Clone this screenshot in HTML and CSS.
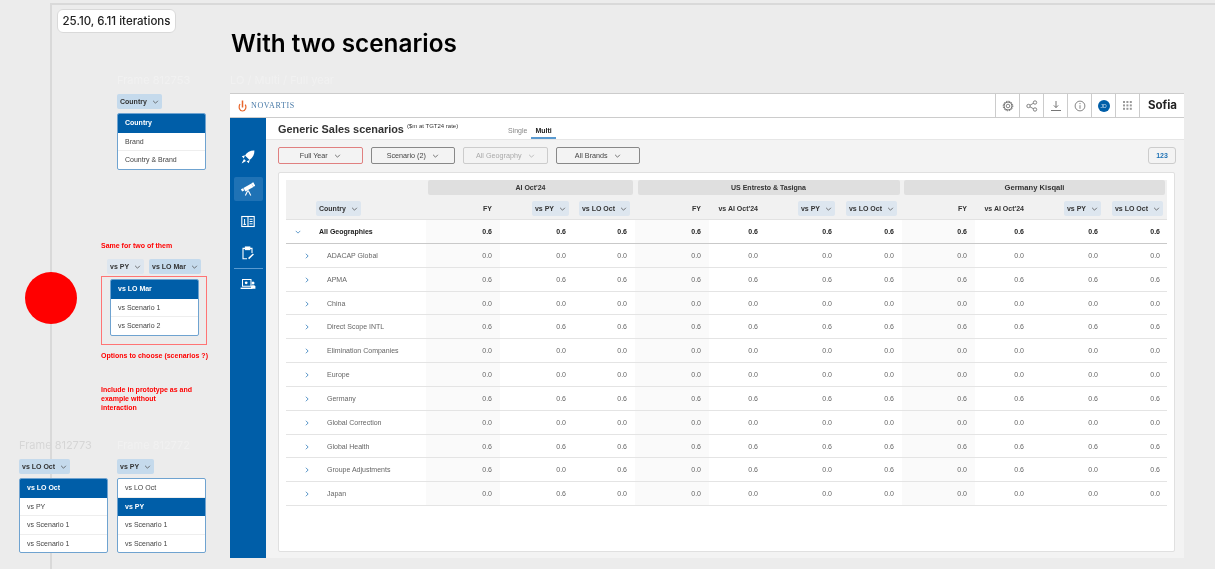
FILE: index.html
```html
<!DOCTYPE html>
<html lang="en">
<head>
  <meta charset="UTF-8">
  <title>With two scenarios</title>
  <link rel="stylesheet" href="styles.css">
</head>
<body>
  <svg class="sprite" width="0" height="0">
    <symbol id="chev" viewBox="0 0 8 5"><path d="M1 1l3 3 3-3" fill="none" stroke="currentColor" stroke-width="0.9"/></symbol>
    <symbol id="next" viewBox="0 0 5 8"><path d="M1 1l3 3-3 3" fill="none" stroke="currentColor" stroke-width="1"/></symbol>
  </svg>

  <div class="frame-lines"></div>
  <div class="tag">25.10, 6.11 iterations</div>
  <h1 class="page-title">With two scenarios</h1>

  <div class="frame-label label-country">Frame 812753</div>
  <div class="frame-label label-lo">LO / Multi / Full year</div>
  <div class="frame-label label-oct">Frame 812773</div>
  <div class="frame-label label-py">Frame 812772</div>

  <!-- country picker -->
  <div class="picker pick-country">
    <span class="chip strong">Country <svg class="chev"><use href="#chev"/></svg></span>
    <ul class="menu">
      <li class="on">Country</li>
      <li>Brand</li>
      <li>Country &amp; Brand</li>
    </ul>
  </div>

  <!-- notes and the two scenario chips -->
  <div class="note note-same">Same for two of them</div>
  <div class="chips-two">
    <span class="chip">vs PY <svg class="chev"><use href="#chev"/></svg></span>
    <span class="chip strong">vs LO Mar <svg class="chev"><use href="#chev"/></svg></span>
  </div>
  <div class="red-box">
    <ul class="menu">
      <li class="on">vs LO Mar</li>
      <li>vs Scenario 1</li>
      <li>vs Scenario 2</li>
    </ul>
  </div>
  <div class="note note-options">Options to choose (scenarios ?)</div>
  <div class="note note-include">Include in prototype as and<br>example without<br>interaction</div>
  <div class="red-dot"></div>

  <div class="picker pick-oct">
    <span class="chip strong">vs LO Oct <svg class="chev"><use href="#chev"/></svg></span>
    <ul class="menu">
      <li class="on">vs LO Oct</li>
      <li>vs PY</li>
      <li>vs Scenario 1</li>
      <li>vs Scenario 1</li>
    </ul>
  </div>
  <div class="picker pick-py">
    <span class="chip strong">vs PY <svg class="chev"><use href="#chev"/></svg></span>
    <ul class="menu">
      <li>vs LO Oct</li>
      <li class="on">vs PY</li>
      <li>vs Scenario 1</li>
      <li>vs Scenario 1</li>
    </ul>
  </div>

  <!-- the app window -->
  <div class="app">
    <header class="topbar">
      <div class="logo">
        <svg width="9" height="12" viewBox="0 0 9 12"><path d="M4.5 0.5v7" stroke="#e8662c" stroke-width="1.5" fill="none"/><path d="M2 4C0.2 7.2 1.6 11 4.5 11S8.8 7.2 7.2 4.6" stroke="#e8662c" stroke-width="1.2" fill="none"/></svg>
        <span>NOVARTIS</span>
      </div>
      <div class="tools">
        <span class="tool"><svg width="12" height="12" viewBox="0 0 12 12" fill="none" stroke="#666"><circle cx="6" cy="6" r="1.8" stroke-width="0.8"/><circle cx="6" cy="6" r="4" stroke-width="0.9"/><circle cx="6" cy="6" r="4.8" stroke-width="1" stroke-dasharray="1.4 1.1"/></svg></span>
        <span class="tool"><svg width="12" height="12" viewBox="0 0 12 12" fill="none" stroke="#666" stroke-width="0.8"><circle cx="2.5" cy="6" r="1.7"/><circle cx="9" cy="2.5" r="1.7"/><circle cx="9" cy="9.5" r="1.7"/><path d="M4 5.2l3.5-2M4 6.8l3.5 2"/></svg></span>
        <span class="tool"><svg width="12" height="12" viewBox="0 0 12 12" fill="none" stroke="#666" stroke-width="0.9"><path d="M6 1v6.5M3.8 5.4L6 7.6l2.2-2.2M1 10.5h10"/></svg></span>
        <span class="tool"><svg width="12" height="12" viewBox="0 0 12 12" fill="none" stroke="#666" stroke-width="0.8"><circle cx="6" cy="6" r="4.9"/><path d="M6 5.2v3.6M6 3v1.1"/></svg></span>
        <span class="tool"><span class="avatar">JD</span></span>
        <span class="tool"><svg width="9" height="9" viewBox="0 0 9 9" fill="#999"><rect width="2" height="2"/><rect x="3.4" width="2" height="2"/><rect x="6.8" width="2" height="2"/><rect y="3.4" width="2" height="2"/><rect x="3.4" y="3.4" width="2" height="2"/><rect x="6.8" y="3.4" width="2" height="2"/><rect y="6.8" width="2" height="2"/><rect x="3.4" y="6.8" width="2" height="2"/><rect x="6.8" y="6.8" width="2" height="2"/></svg></span>
        <span class="brand">Sofia</span>
      </div>
    </header>

    <nav class="sidebar">
      <a class="nav-item"><svg width="14" height="14" viewBox="0 0 14 14" fill="#fff"><path d="M13.4 0.6C9.6 0.4 6.2 2 4 5.4L8.6 10c3.4-2.2 5-5.6 4.8-9.4z"/><path d="M4 5.2L0.8 6.2l2 2.2zM8.8 10l-1 3.2-2.2-2z"/><path d="M3 9l-2.4 4.4L5 11z"/></svg></a>
      <a class="nav-item active"><svg width="14" height="14" viewBox="0 0 14 14" fill="#fff"><path d="M2.4 6L10.4 1.4l2 3.6-8 4.4z"/><rect x="11.2" y="0.4" width="2.2" height="4.2" transform="rotate(-28 12.3 2.5)"/><rect x="0.4" y="6.6" width="2.4" height="2.6" transform="rotate(-28 1.6 7.9)"/><path d="M6.8 8.4L4.4 13.6M7.2 8.4l2.6 5.2" stroke="#fff" stroke-width="1.1" fill="none"/></svg></a>
      <a class="nav-item"><svg width="14" height="13" viewBox="0 0 14 13" fill="none" stroke="#fff"><rect x="0.8" y="1.5" width="12.4" height="10" stroke-width="1.1"/><path d="M7 1.5v10" stroke-width="1.1"/><path d="M3.6 4v5.6M2.4 9.4h2.6M8.6 4.2h3M8.6 6.5h3M8.6 8.8h3" stroke-width="1"/></svg></a>
      <a class="nav-item"><svg width="14" height="14" viewBox="0 0 14 14" fill="none" stroke="#fff" stroke-width="1.1"><path d="M11 7V2.4H9M4 2.4H2v10.4h4"/><rect x="4.4" y="1" width="4.4" height="2.6" fill="#fff"/><path d="M7.6 12.6l4.8-4.6" stroke-width="1.5"/></svg></a>
      <div class="nav-line"></div>
      <a class="nav-item"><svg width="16" height="13" viewBox="0 0 16 13" fill="#fff"><path d="M2 1h9.5v7.8H2zM3 2v5.8h7.5V2z" fill-rule="evenodd"/><path d="M0.6 9.6h11.8v1.4H0.6z"/><circle cx="6.2" cy="4.8" r="1.4"/><circle cx="13" cy="5" r="1.5"/><path d="M11 10.8V8.6c0-.8.8-1.3 2-1.3s2.4.5 2.4 1.3v2.2z"/></svg></a>
    </nav>

    <main class="main">
      <div class="title-row">
        <h2>Generic Sales scenarios <sup>($m at TGT24 rate)</sup></h2>
        <div class="tabs">
          <span class="tab">Single</span>
          <span class="tab selected">Multi</span>
        </div>
      </div>

      <div class="toolbar">
        <span class="btn btn-red">Full Year <svg class="chev"><use href="#chev"/></svg></span>
        <span class="btn">Scenario (2) <svg class="chev"><use href="#chev"/></svg></span>
        <span class="btn btn-off">All Geography <svg class="chev"><use href="#chev"/></svg></span>
        <span class="btn">All Brands <svg class="chev"><use href="#chev"/></svg></span>
        <span class="btn-num">123</span>
      </div>

      <section class="card">
        <div class="head">
          <div class="row groups">
            <div class="group g-one">AI Oct'24</div>
            <div class="group g-two">US Entresto &amp; Tasigna</div>
            <div class="group g-three">Germany Kisqali</div>
          </div>
          <div class="row subs">
            <div class="name"><span class="chip">Country <svg class="chev"><use href="#chev"/></svg></span></div>
            <div class="col">FY</div>
            <div class="col"><span class="chip">vs PY <svg class="chev"><use href="#chev"/></svg></span></div>
            <div class="col"><span class="chip">vs LO Oct <svg class="chev"><use href="#chev"/></svg></span></div>
            <div class="col">FY</div>
            <div class="col">vs AI Oct'24</div>
            <div class="col"><span class="chip">vs PY <svg class="chev"><use href="#chev"/></svg></span></div>
            <div class="col"><span class="chip">vs LO Oct <svg class="chev"><use href="#chev"/></svg></span></div>
            <div class="col">FY</div>
            <div class="col">vs AI Oct'24</div>
            <div class="col"><span class="chip">vs PY <svg class="chev"><use href="#chev"/></svg></span></div>
            <div class="col"><span class="chip">vs LO Oct <svg class="chev"><use href="#chev"/></svg></span></div>
          </div>
        </div>

        <div class="row total">
          <div class="name"><svg class="toggle"><use href="#chev"/></svg>All Geographies</div>
          <div class="fy">0.6</div><div>0.6</div><div>0.6</div>
          <div class="fy">0.6</div><div>0.6</div><div>0.6</div><div>0.6</div>
          <div class="fy">0.6</div><div>0.6</div><div>0.6</div><div>0.6</div>
        </div>
        <div class="row item">
          <div class="name"><svg class="arrow"><use href="#next"/></svg>ADACAP Global</div>
          <div class="fy">0.0</div><div>0.0</div><div>0.0</div>
          <div class="fy">0.0</div><div>0.0</div><div>0.0</div><div>0.0</div>
          <div class="fy">0.0</div><div>0.0</div><div>0.0</div><div>0.0</div>
        </div>
        <div class="row item">
          <div class="name"><svg class="arrow"><use href="#next"/></svg>APMA</div>
          <div class="fy">0.6</div><div>0.6</div><div>0.6</div>
          <div class="fy">0.6</div><div>0.6</div><div>0.6</div><div>0.6</div>
          <div class="fy">0.6</div><div>0.6</div><div>0.6</div><div>0.6</div>
        </div>
        <div class="row item short">
          <div class="name"><svg class="arrow"><use href="#next"/></svg>China</div>
          <div class="fy">0.0</div><div>0.0</div><div>0.0</div>
          <div class="fy">0.0</div><div>0.0</div><div>0.0</div><div>0.0</div>
          <div class="fy">0.0</div><div>0.0</div><div>0.0</div><div>0.0</div>
        </div>
        <div class="row item">
          <div class="name"><svg class="arrow"><use href="#next"/></svg>Direct Scope INTL</div>
          <div class="fy">0.6</div><div>0.6</div><div>0.6</div>
          <div class="fy">0.6</div><div>0.6</div><div>0.6</div><div>0.6</div>
          <div class="fy">0.6</div><div>0.6</div><div>0.6</div><div>0.6</div>
        </div>
        <div class="row item">
          <div class="name"><svg class="arrow"><use href="#next"/></svg>Elimination Companies</div>
          <div class="fy">0.0</div><div>0.0</div><div>0.0</div>
          <div class="fy">0.0</div><div>0.0</div><div>0.0</div><div>0.0</div>
          <div class="fy">0.0</div><div>0.0</div><div>0.0</div><div>0.0</div>
        </div>
        <div class="row item">
          <div class="name"><svg class="arrow"><use href="#next"/></svg>Europe</div>
          <div class="fy">0.0</div><div>0.0</div><div>0.0</div>
          <div class="fy">0.0</div><div>0.0</div><div>0.0</div><div>0.0</div>
          <div class="fy">0.0</div><div>0.0</div><div>0.0</div><div>0.0</div>
        </div>
        <div class="row item">
          <div class="name"><svg class="arrow"><use href="#next"/></svg>Germany</div>
          <div class="fy">0.6</div><div>0.6</div><div>0.6</div>
          <div class="fy">0.6</div><div>0.6</div><div>0.6</div><div>0.6</div>
          <div class="fy">0.6</div><div>0.6</div><div>0.6</div><div>0.6</div>
        </div>
        <div class="row item">
          <div class="name"><svg class="arrow"><use href="#next"/></svg>Global Correction</div>
          <div class="fy">0.0</div><div>0.0</div><div>0.0</div>
          <div class="fy">0.0</div><div>0.0</div><div>0.0</div><div>0.0</div>
          <div class="fy">0.0</div><div>0.0</div><div>0.0</div><div>0.0</div>
        </div>
        <div class="row item short">
          <div class="name"><svg class="arrow"><use href="#next"/></svg>Global Health</div>
          <div class="fy">0.6</div><div>0.6</div><div>0.6</div>
          <div class="fy">0.6</div><div>0.6</div><div>0.6</div><div>0.6</div>
          <div class="fy">0.6</div><div>0.6</div><div>0.6</div><div>0.6</div>
        </div>
        <div class="row item">
          <div class="name"><svg class="arrow"><use href="#next"/></svg>Groupe Adjustments</div>
          <div class="fy">0.6</div><div>0.0</div><div>0.6</div>
          <div class="fy">0.0</div><div>0.6</div><div>0.0</div><div>0.6</div>
          <div class="fy">0.0</div><div>0.6</div><div>0.0</div><div>0.6</div>
        </div>
        <div class="row item">
          <div class="name"><svg class="arrow"><use href="#next"/></svg>Japan</div>
          <div class="fy">0.0</div><div>0.6</div><div>0.0</div>
          <div class="fy">0.0</div><div>0.0</div><div>0.0</div><div>0.0</div>
          <div class="fy">0.0</div><div>0.0</div><div>0.0</div><div>0.0</div>
        </div>
      </section>
    </main>
  </div>
</body>
</html>
```

FILE: styles.css
```css
html, body {
  margin: 0;
  height: 100%;
  overflow: hidden;
}

body {
  position: relative;
  width: 1215px;
  height: 569px;
  background: #ececec;
  font-family: "Liberation Sans", Arial, sans-serif;
  font-size: 7px;
  color: #333;
}

/* own layer for each top level piece, keeps the small text grey */
body > * {
  will-change: transform;
}

.sprite {
  position: absolute;
}

/* canvas level: things placed freely on the design board */
.frame-lines {
  position: absolute;
  left: 50px;
  top: 3px;
  width: 1165px;
  height: 566px;
  border-left: 2px solid #d9d9d9;
  border-top: 2px solid #d9d9d9;
  box-sizing: border-box;
}

.tag {
  position: absolute;
  left: 57px;
  top: 9px;
  width: 119px;
  height: 24px;
  box-sizing: border-box;
  background: #fff;
  border: 1px solid #d9d9d9;
  border-radius: 6px;
  font-family: Inter, sans-serif;
  font-size: 11.5px;
  font-weight: 500;
  line-height: 22px;
  text-align: center;
  color: #222;
}

.page-title {
  position: absolute;
  left: 231px;
  top: 28px;
  margin: 0;
  font-family: Inter, sans-serif;
  font-size: 24.3px;
  line-height: 30px;
  font-weight: 600;
  color: #000;
}

.frame-label {
  position: absolute;
  font-family: Inter, sans-serif;
  font-size: 11px;
  line-height: 14px;
  color: #f1f1f1;
}

.label-country { left: 117px; top: 73px; }
.label-lo { left: 230px; top: 73px; }
.label-oct { left: 19px; top: 438px; color: #d6d6d6; }
.label-py { left: 117px; top: 438px; }

.picker {
  position: absolute;
  width: 89px;
}

.pick-country { left: 117px; top: 94px; }
.pick-oct { left: 19px; top: 459px; }
.pick-py { left: 117px; top: 459px; }

.picker .menu {
  margin-top: 4px;
}

.chip {
  display: inline-flex;
  align-items: center;
  gap: 5px;
  height: 15px;
  padding: 0 3px;
  background: #dde6ef;
  border-radius: 2px;
  font-size: 7px;
  font-weight: bold;
  color: #333;
  white-space: nowrap;
}

.chip.strong {
  background: #c5daec;
}

.chev {
  width: 7px;
  height: 4px;
  color: #444;
}

.menu {
  list-style: none;
  margin: 0;
  padding: 0;
  background: #fff;
  border: 1px solid #6fa3d0;
  border-radius: 2px;
  box-sizing: border-box;
  overflow: hidden;
}

.menu li {
  height: 18.5px;
  padding-left: 7px;
  font-size: 7px;
  line-height: 17.5px;
  color: #444;
  border-bottom: 1px solid #eee;
  box-sizing: border-box;
}

.menu li:last-child {
  border-bottom: none;
  height: 17.5px;
}

.menu li.on {
  background: #005ea8;
  color: #fff;
  font-weight: bold;
  border-bottom: none;
}

.note {
  position: absolute;
  left: 101px;
  color: #f00;
  font-size: 7px;
  font-weight: bold;
  line-height: 9px;
}

.note-same { top: 241px; }
.note-options { top: 351px; }
.note-include { top: 385px; }

.chips-two {
  position: absolute;
  left: 107px;
  top: 259px;
  display: flex;
  gap: 5px;
}

.red-box {
  position: absolute;
  left: 101px;
  top: 276px;
  width: 106px;
  height: 69px;
  box-sizing: border-box;
  border: 1px solid #ff7474;
  padding: 2px 7px 0 8px;
}

.red-dot {
  position: absolute;
  left: 25px;
  top: 272px;
  width: 52px;
  height: 52px;
  border-radius: 50%;
  background: #f00;
}

/* the app */
.app {
  position: absolute;
  left: 230px;
  top: 93px;
  width: 954px;
  height: 465px;
  display: grid;
  grid-template-columns: 36px 1fr;
  grid-template-rows: 24px 1fr;
  border-top: 1px solid #ccc;
  box-sizing: border-box;
}

.topbar {
  grid-column: 1 / 3;
  display: flex;
  justify-content: space-between;
  background: #fff;
  border-bottom: 1px solid #ccc;
}

.logo {
  display: flex;
  align-items: center;
  gap: 4px;
  padding-left: 8px;
  font-family: "Liberation Serif", serif;
  font-size: 8px;
  letter-spacing: 0.6px;
  color: #4a7ba8;
}

.tools {
  display: flex;
}

.tool {
  width: 24px;
  display: flex;
  align-items: center;
  justify-content: center;
  border-left: 1px solid #ccc;
  box-sizing: border-box;
}

.avatar {
  width: 12px;
  height: 12px;
  border-radius: 50%;
  background: #005ea8;
  color: #cfe0f0;
  font-size: 5px;
  line-height: 12px;
  text-align: center;
}

.brand {
  width: 45px;
  border-left: 1px solid #ccc;
  padding-left: 8px;
  box-sizing: border-box;
  font-family: Inter, sans-serif;
  font-size: 11.5px;
  font-weight: 700;
  line-height: 23px;
  color: #222;
}

.sidebar {
  background: #005ea8;
  display: flex;
  flex-direction: column;
  align-items: center;
  padding-top: 27px;
}

.nav-item {
  width: 29px;
  height: 24px;
  margin-bottom: 8px;
  display: flex;
  align-items: center;
  justify-content: center;
  border-radius: 2px;
}

.nav-item.active {
  background: #1f72b5;
}

.nav-line {
  width: 29px;
  height: 1px;
  margin: -5px 0 3px;
  background: #5a9ad0;
}

.main {
  background: #f3f3f3;
  display: flex;
  flex-direction: column;
  min-width: 0;
}

.title-row {
  height: 22px;
  padding-left: 12px;
  background: #fff;
  border-bottom: 1px solid #e6e6e6;
  display: flex;
  align-items: flex-start;
  box-sizing: border-box;
}

.title-row h2 {
  margin: 4px 0 0;
  width: 226px;
  font-size: 10.9px;
  line-height: 14px;
  color: #333;
  white-space: nowrap;
}

.title-row sup {
  font-size: 6px;
  font-weight: normal;
  vertical-align: 5px;
  line-height: 0;
}

.tabs {
  display: flex;
}

.tab {
  padding: 0 4px;
  height: 21px;
  line-height: 25px;
  font-size: 7px;
  color: #888;
  box-sizing: border-box;
}

.tab.selected {
  color: #222;
  font-weight: bold;
  border-bottom: 2px solid #5a9ad0;
}

.toolbar {
  height: 32px;
  padding: 7px 8px 0 12px;
  display: flex;
  align-items: flex-start;
  gap: 8px;
  box-sizing: border-box;
}

.btn {
  width: 84.5px;
  height: 17px;
  display: flex;
  align-items: center;
  justify-content: center;
  gap: 6px;
  box-sizing: border-box;
  border: 1px solid #888;
  border-radius: 2px;
  font-size: 7.2px;
  color: #444;
}

.btn-red {
  border-color: #e08080;
}

.btn-off {
  border-color: #ccc;
  color: #aaa;
}

.btn-off .chev {
  color: #aaa;
}

.btn-num {
  margin-left: auto;
  width: 28px;
  height: 17px;
  box-sizing: border-box;
  border: 1px solid #ccc;
  border-radius: 3px;
  text-align: center;
  font-size: 7px;
  font-weight: bold;
  line-height: 15px;
  color: #1f72b5;
}

.card {
  margin: 0 9px 6px 12px;
  flex: 1;
  padding: 7px 7px 0;
  background: #fff;
  border: 1px solid #e0e0e0;
  border-radius: 2px;
}

/* one grid template for every table row, so the columns line up */
.row {
  display: grid;
  grid-template-columns: 140px 74px 74px 61px 74px 57px 74px 62px 73px 57px 74px 62px;
  align-items: stretch;
}

.head {
  background: #f1f1f1;
  border-bottom: 1px solid #e2e2e2;
  height: 40px;
  box-sizing: border-box;
}

.groups {
  height: 15px;
}

.group {
  background: #dfdfdf;
  border-radius: 2px;
  margin: 0 2px;
  text-align: center;
  font-size: 7px;
  font-weight: bold;
  line-height: 15px;
  color: #333;
}

.g-one { grid-column: 2 / span 3; }
.g-two { grid-column: 5 / span 4; margin: 0 2.5px; }
.g-three { grid-column: 9 / span 4; margin: 0 3px 0 2px; font-size: 7.6px; }

.subs {
  margin-top: 6px;
  height: 15px;
}

.subs .col {
  display: flex;
  justify-content: flex-end;
  align-items: center;
  padding-right: 8px;
  font-weight: bold;
  color: #333;
}

.subs .col .chip {
  margin-right: -3px;
}

.subs .name {
  padding-left: 30px;
}

.total, .item {
  height: 24px;
  box-sizing: border-box;
  border-bottom: 1px solid #e4e4e4;
  line-height: 22px;
  text-align: right;
  color: #666;
}

.item.short {
  height: 23px;
  line-height: 21px;
}

.total {
  border-bottom-color: #c9c9c9;
  font-weight: bold;
  color: #222;
}

.total > div, .item > div {
  padding: 1px 8px 0 0;
}

.name {
  display: flex;
  align-items: center;
  text-align: left;
}

.item .name {
  padding-left: 19px;
}

.total .name {
  padding-left: 9px;
}

.fy {
  background: #fafafa;
}

.toggle {
  width: 6px;
  height: 4px;
  margin-right: 18px;
  color: #1f72b5;
}

.arrow {
  width: 4px;
  height: 6px;
  margin-right: 18px;
  color: #1f72b5;
}
```
